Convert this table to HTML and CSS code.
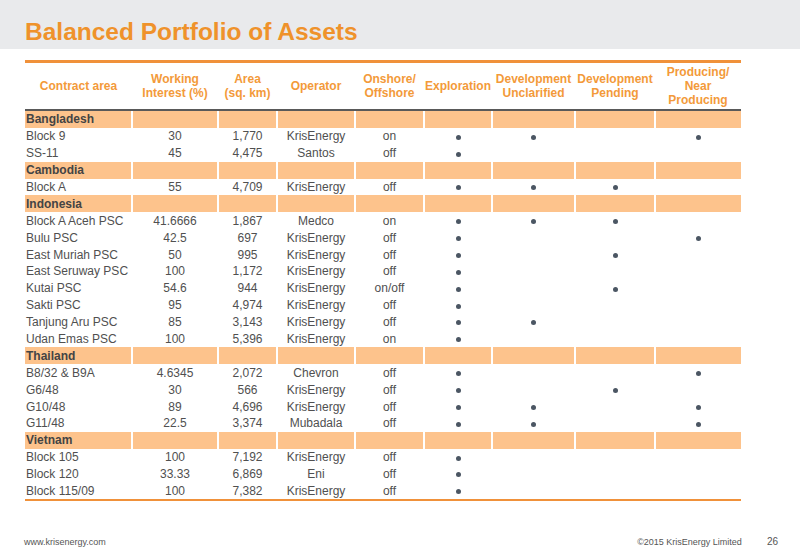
FILE: index.html
```html
<!DOCTYPE html>
<html lang="en">
<head>
	<meta charset="UTF-8">
	<title>Balanced Portfolio of Assets</title>
	<link rel="stylesheet" href="styles.css">
</head>
<body>
	<div class="slide">
		<div class="titleBar">
			<h1>Balanced Portfolio of Assets</h1>
		</div>

		<table class="assets">
			<thead>
				<tr>
					<th class="c1">Contract area</th>
					<th class="c2">Working<br>Interest (%)</th>
					<th class="c3">Area<br>(sq. km)</th>
					<th class="c4">Operator</th>
					<th class="c5">Onshore/<br>Offshore</th>
					<th class="c6">Exploration</th>
					<th class="c7">Development<br>Unclarified</th>
					<th class="c8">Development<br>Pending</th>
					<th class="c9">Producing/<br>Near<br>Producing</th>
				</tr>
			</thead>
			<tbody>
				<tr class="country"><td>Bangladesh</td><td></td><td></td><td></td><td></td><td></td><td></td><td></td><td></td></tr>
				<tr><td>Block 9</td><td>30</td><td>1,770</td><td>KrisEnergy</td><td>on</td><td><i class="dot"></i></td><td><i class="dot"></i></td><td></td><td><i class="dot"></i></td></tr>
				<tr><td>SS-11</td><td>45</td><td>4,475</td><td>Santos</td><td>off</td><td><i class="dot"></i></td><td></td><td></td><td></td></tr>

				<tr class="country"><td>Cambodia</td><td></td><td></td><td></td><td></td><td></td><td></td><td></td><td></td></tr>
				<tr><td>Block A</td><td>55</td><td>4,709</td><td>KrisEnergy</td><td>off</td><td><i class="dot"></i></td><td><i class="dot"></i></td><td><i class="dot"></i></td><td></td></tr>

				<tr class="country"><td>Indonesia</td><td></td><td></td><td></td><td></td><td></td><td></td><td></td><td></td></tr>
				<tr><td>Block A Aceh PSC</td><td>41.6666</td><td>1,867</td><td>Medco</td><td>on</td><td><i class="dot"></i></td><td><i class="dot"></i></td><td><i class="dot"></i></td><td></td></tr>
				<tr><td>Bulu PSC</td><td>42.5</td><td>697</td><td>KrisEnergy</td><td>off</td><td><i class="dot"></i></td><td></td><td></td><td><i class="dot"></i></td></tr>
				<tr><td>East Muriah PSC</td><td>50</td><td>995</td><td>KrisEnergy</td><td>off</td><td><i class="dot"></i></td><td></td><td><i class="dot"></i></td><td></td></tr>
				<tr><td>East Seruway PSC</td><td>100</td><td>1,172</td><td>KrisEnergy</td><td>off</td><td><i class="dot"></i></td><td></td><td></td><td></td></tr>
				<tr><td>Kutai PSC</td><td>54.6</td><td>944</td><td>KrisEnergy</td><td>on/off</td><td><i class="dot"></i></td><td></td><td><i class="dot"></i></td><td></td></tr>
				<tr><td>Sakti PSC</td><td>95</td><td>4,974</td><td>KrisEnergy</td><td>off</td><td><i class="dot"></i></td><td></td><td></td><td></td></tr>
				<tr><td>Tanjung Aru PSC</td><td>85</td><td>3,143</td><td>KrisEnergy</td><td>off</td><td><i class="dot"></i></td><td><i class="dot"></i></td><td></td><td></td></tr>
				<tr><td>Udan Emas PSC</td><td>100</td><td>5,396</td><td>KrisEnergy</td><td>on</td><td><i class="dot"></i></td><td></td><td></td><td></td></tr>

				<tr class="country"><td>Thailand</td><td></td><td></td><td></td><td></td><td></td><td></td><td></td><td></td></tr>
				<tr><td>B8/32 &amp; B9A</td><td>4.6345</td><td>2,072</td><td>Chevron</td><td>off</td><td><i class="dot"></i></td><td></td><td></td><td><i class="dot"></i></td></tr>
				<tr><td>G6/48</td><td>30</td><td>566</td><td>KrisEnergy</td><td>off</td><td><i class="dot"></i></td><td></td><td><i class="dot"></i></td><td></td></tr>
				<tr><td>G10/48</td><td>89</td><td>4,696</td><td>KrisEnergy</td><td>off</td><td><i class="dot"></i></td><td><i class="dot"></i></td><td></td><td><i class="dot"></i></td></tr>
				<tr><td>G11/48</td><td>22.5</td><td>3,374</td><td>Mubadala</td><td>off</td><td><i class="dot"></i></td><td><i class="dot"></i></td><td></td><td><i class="dot"></i></td></tr>

				<tr class="country"><td>Vietnam</td><td></td><td></td><td></td><td></td><td></td><td></td><td></td><td></td></tr>
				<tr><td>Block 105</td><td>100</td><td>7,192</td><td>KrisEnergy</td><td>off</td><td><i class="dot"></i></td><td></td><td></td><td></td></tr>
				<tr><td>Block 120</td><td>33.33</td><td>6,869</td><td>Eni</td><td>off</td><td><i class="dot"></i></td><td></td><td></td><td></td></tr>
				<tr><td>Block 115/09</td><td>100</td><td>7,382</td><td>KrisEnergy</td><td>off</td><td><i class="dot"></i></td><td></td><td></td><td></td></tr>
			</tbody>
		</table>

		<div class="footer">
			<span class="site">www.krisenergy.com</span>
			<span class="copy">&copy;2015 KrisEnergy Limited</span>
			<span class="page">26</span>
		</div>
	</div>
</body>
</html>
```

FILE: styles.css
```css
body {
	margin: 0;
	font-family: "Liberation Sans", Arial, sans-serif;
	color: #505050;
	background: #fff;
}

.slide {
	width: 800px;
	height: 558px;
	display: flex;
	flex-direction: column;
}

.titleBar {
	height: 49px;
	background-color: #e9eaec;
	padding-left: 25px;
	box-sizing: border-box;
}

.titleBar h1 {
	margin: 0;
	padding-top: 19px;
	font-size: 24.5px;
	line-height: 26px;
	font-weight: bold;
	color: #ef922b;
}

.assets {
	margin: 11px 0 0 25px;
	width: 716px;
	border-collapse: collapse;
	table-layout: fixed;
	font-size: 12px;
	border-top: 3px solid #f0913a;
	border-bottom: 2px solid #f0913a;
}

.assets th {
	height: 46px;
	padding: 0;
	color: #f39a3a;
	font-weight: bold;
	line-height: 14px;
	text-align: center;
	vertical-align: middle;
	border-bottom: 2px solid #595959;
}

.c1 { width: 107px; }
.c2 { width: 86px; }
.c3 { width: 59px; }
.c4 { width: 78px; }
.c5 { width: 69px; }
.c6 { width: 68px; }
.c7 { width: 83px; }
.c8 { width: 80px; }
.c9 { width: 86px; }

.assets td {
	height: 16.9px;
	padding: 0;
	line-height: 14px;
	text-align: center;
	vertical-align: middle;
	white-space: nowrap;
}

.assets td:first-child {
	text-align: left;
	padding-left: 1px;
}

.country td {
	background-color: #fdc38c;
	border-left: 2px solid #fff;
	font-weight: bold;
	color: #444;
}

.country td:first-child {
	border-left: none;
}

.dot {
	display: inline-block;
	width: 5px;
	height: 5px;
	border-radius: 50%;
	background-color: #4b5663;
	vertical-align: middle;
}

.footer {
	display: flex;
	align-items: baseline;
	margin-top: 35px;
	padding: 0 22px 0 24px;
	font-size: 9px;
	color: #555;
}

.site {
	flex: 1;
}

.copy {
	margin-right: 25px;
}

.page {
	font-size: 10px;
}
```
